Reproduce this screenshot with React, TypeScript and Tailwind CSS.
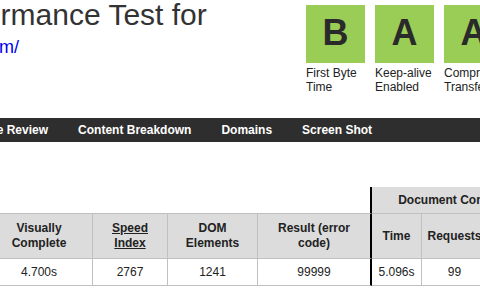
const grades = [
  { grade: 'B', label: 'First Byte Time' },
  { grade: 'A', label: 'Keep-alive Enabled' },
  { grade: 'A', label: 'Compress Transfer' },
];

const tabs = ['Performance Review', 'Content Breakdown', 'Domains', 'Screen Shot'];

export default function App() {
  const head = 'flex items-center justify-center border-b border-r border-[#c0c0c0] bg-[#dcdcdc] px-1 text-center text-[12px] font-bold leading-[15px] text-[#222]';
  const cell = 'flex items-center justify-center border-b border-r border-[#c0c0c0] text-[12px] text-[#222]';

  return (
    <div className="h-[292px] w-[480px] overflow-hidden bg-white font-['Liberation_Sans',Arial,sans-serif]">
      {/* header: title + grades */}
      <div className="flex h-[118px]">
        <div className="w-[306px] shrink-0 whitespace-nowrap">
          <h1 className="-ml-[219px] text-[30px] leading-[30px] text-[#333]">Web Page Performance Test for</h1>
          <a href="#" className="-ml-[190px] mt-[6px] block text-[18px] leading-[22px] text-[#0000ee]">
            https://www.example.com/
          </a>
        </div>
        <div className="flex shrink-0 gap-[10px] pt-[5px]">
          {grades.map((g, i) => (
            <div key={i} className="w-[59px] shrink-0">
              <div className="flex h-[58px] items-center justify-center bg-[#9acd55] pb-[3px] text-[36px] font-bold text-[#2a2a2a]">
                {g.grade}
              </div>
              <div className="mt-[3px] text-[12px] leading-[14px] text-[#222]">{g.label}</div>
            </div>
          ))}
        </div>
      </div>

      {/* tab bar */}
      <nav className="flex h-[24px] items-center bg-[#2e2e2e]">
        <div className="-ml-[85px] flex whitespace-nowrap">
          {tabs.map((t) => (
            <span key={t} className="px-[15px] text-[12px] font-bold leading-[24px] text-white">
              {t}
            </span>
          ))}
        </div>
      </nav>

      {/* results table */}
      <div className="-ml-[14px] mt-[45px] grid w-max grid-cols-[107px_75px_90px_114px_50px_66px_53px]">
        <div className="col-span-4 h-[27px] border-b border-r-2 border-b-[#c0c0c0] border-r-black" />
        <div className="col-span-3 flex h-[27px] items-center justify-center border-b border-[#c0c0c0] bg-[#dcdcdc] text-[12px] font-bold text-[#222]">
          Document Complete
        </div>

        <div className={`${head} h-[45px]`}>Visually Complete</div>
        <div className={`${head} h-[45px]`}>
          <a href="#" className="underline">Speed Index</a>
        </div>
        <div className={`${head} h-[45px]`}>DOM Elements</div>
        <div className={`${head} h-[45px] border-r-2 border-r-black`}>Result (error code)</div>
        <div className={`${head} h-[45px]`}>Time</div>
        <div className={`${head} h-[45px]`}>Requests</div>
        <div className={`${head} h-[45px]`}>Bytes In</div>

        <div className={`${cell} h-[27px]`}>4.700s</div>
        <div className={`${cell} h-[27px]`}>2767</div>
        <div className={`${cell} h-[27px]`}>1241</div>
        <div className={`${cell} h-[27px] border-r-2 border-r-black`}>99999</div>
        <div className={`${cell} h-[27px]`}>5.096s</div>
        <div className={`${cell} h-[27px]`}>99</div>
        <div className={`${cell} h-[27px]`}></div>
      </div>
    </div>
  );
}
